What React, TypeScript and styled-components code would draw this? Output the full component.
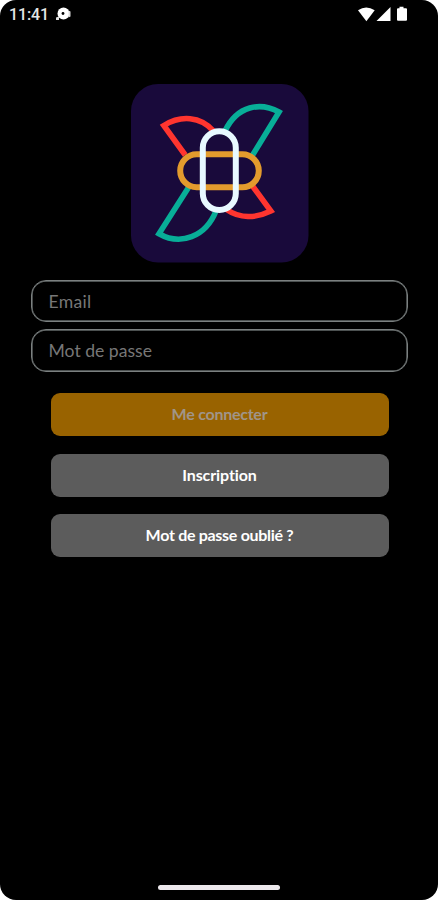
import React from "react";
import styled, { createGlobalStyle } from "styled-components";

const GlobalStyle = createGlobalStyle`
  html, body { margin: 0; padding: 0; background: #fff; }
  *, *::before, *::after { box-sizing: border-box; }
`;

const Screen = styled.main`
  width: 438px;
  height: 900px;
  display: flex;
  flex-direction: column;
  align-items: center;
  overflow: hidden;
  background: #000;
  border-radius: 16px;
  font-family: Lato, sans-serif;
`;

const StatusBar = styled.header`
  width: 100%;
  height: 28px;
  padding: 0 29px 0 9px;
  display: flex;
  align-items: center;
  justify-content: space-between;
  flex: none;
`;

const StatusGroup = styled.div`
  display: flex;
  align-items: center;
  gap: 7px;
`;

const Clock = styled.span`
  padding-top: 2px;
  font: 500 16px/28px Roboto, sans-serif;
  letter-spacing: -0.1px;
  color: #e6e6e6;
`;

const StatusIcon = styled.svg`
  display: block;
  flex: none;
`;

const Logo = styled.svg`
  display: block;
  flex: none;
  margin: 56px 0 0 2px;
`;

const Form = styled.form`
  width: 377px;
  margin-top: 17px;
  display: flex;
  flex-direction: column;
  align-items: center;
`;

const Field = styled.input<{ $tracking?: string }>`
  width: 100%;
  height: 42px;
  padding: 0 17px;
  border: 1px solid #7b8080;
  box-shadow: inset 0 0 0 0.7px #666c6c;
  border-radius: 15px;
  background: transparent;
  color: #fff;
  font: 400 17.6px Lato, sans-serif;
  letter-spacing: ${({ $tracking }) => $tracking ?? "normal"};
  outline: none;

  & + & { height: 43px; margin-top: 7px; }
  &::placeholder { color: #777; opacity: 1; }
`;

const Actions = styled.div`
  width: 338px;
  margin: 21px 0 0 1px;
  display: flex;
  flex-direction: column;
  gap: 17.5px;
`;

const Button = styled.button<{ $primary?: boolean; $tracking?: string }>`
  height: 43px;
  padding: 0 0 1px;
  border: 0;
  border-radius: 9px;
  background: ${({ $primary }) => ($primary ? "#996300" : "#5c5c5c")};
  color: ${({ $primary }) => ($primary ? "#a09589" : "#fff")};
  font: 700 16px/42px Lato, sans-serif;
  letter-spacing: ${({ $tracking }) => $tracking ?? "-0.25px"};
  font-variant-ligatures: none;
`;

const HomeIndicator = styled.div`
  width: 122px;
  height: 5px;
  margin: auto 0 10.5px;
  border-radius: 3px;
  background: #ece8ec;
`;

function Emblem() {
  return (
    <Logo width="178" height="179" viewBox="0 0 178 179" fill="none" aria-label="Logo">
      <rect width="177.5" height="178.5" rx="27" fill="#190a3b" />
      <g transform="translate(-0.5 0)">
        <g strokeWidth="5.6">
          <path d="M54.7 71 33.3 41.5C50 31 70 32 83 47" stroke="#ff352f" />
          <path d="M96 125.5C109 134.5 125 134.5 140.3 127L122 102" stroke="#ff352f" />
          <path d="M94.5 47C107 21 130 18 148.5 28L121.5 72" stroke="#08ae98" />
          <path d="M58 103.5 28.5 149.7C50 162 75 153 85.5 127" stroke="#08ae98" />
        </g>
        <rect x="49.7" y="70.3" width="78.6" height="33" rx="16.5" stroke="#e39b2d" strokeWidth="6" />
        <rect x="72.3" y="47.3" width="33" height="78.7" rx="16.5" stroke="#e8f9ff" strokeWidth="6" />
      </g>
    </Logo>
  );
}

export default function App() {
  return (
    <>
      <GlobalStyle />
      <Screen>
        <StatusBar>
          <StatusGroup>
            <Clock>11:41</Clock>
            <StatusIcon width="17" height="14" viewBox="0 0 17 14">
              <circle cx="7.5" cy="6.5" r="6" fill="#fff" />
              <path d="M0 10.5 3 9.5v3.5H0zM12.5 3.5l2 1v5l-2 1z" fill="#ddd" />
              <circle cx="7" cy="6.5" r="1.4" fill="#000" />
            </StatusIcon>
          </StatusGroup>
          <StatusIcon width="51" height="18" viewBox="0 0 51 18" fill="#fff">
            <path d="M0 5.2Q8.2-.3 16.7 5.2L8.4 16.2z" />
            <path d="M32.5 2v14H18.5z" />
            <path d="M41.5 3.2V1.8h4v1.4H48q1 0 1 1v10.6q0 1-1 1h-8q-1 0-1-1V4.2q0-1 1-1z" />
          </StatusIcon>
        </StatusBar>
        <Emblem />
        <Form onSubmit={(event) => event.preventDefault()}>
          <Field type="email" placeholder="Email" $tracking="0.3px" />
          <Field type="password" placeholder="Mot de passe" />
          <Actions>
            <Button type="submit" $primary>Me connecter</Button>
            <Button type="button" $tracking="-0.1px">Inscription</Button>
            <Button type="button" $tracking="-0.3px">Mot de passe oublié ?</Button>
          </Actions>
        </Form>
        <HomeIndicator />
      </Screen>
    </>
  );
}
